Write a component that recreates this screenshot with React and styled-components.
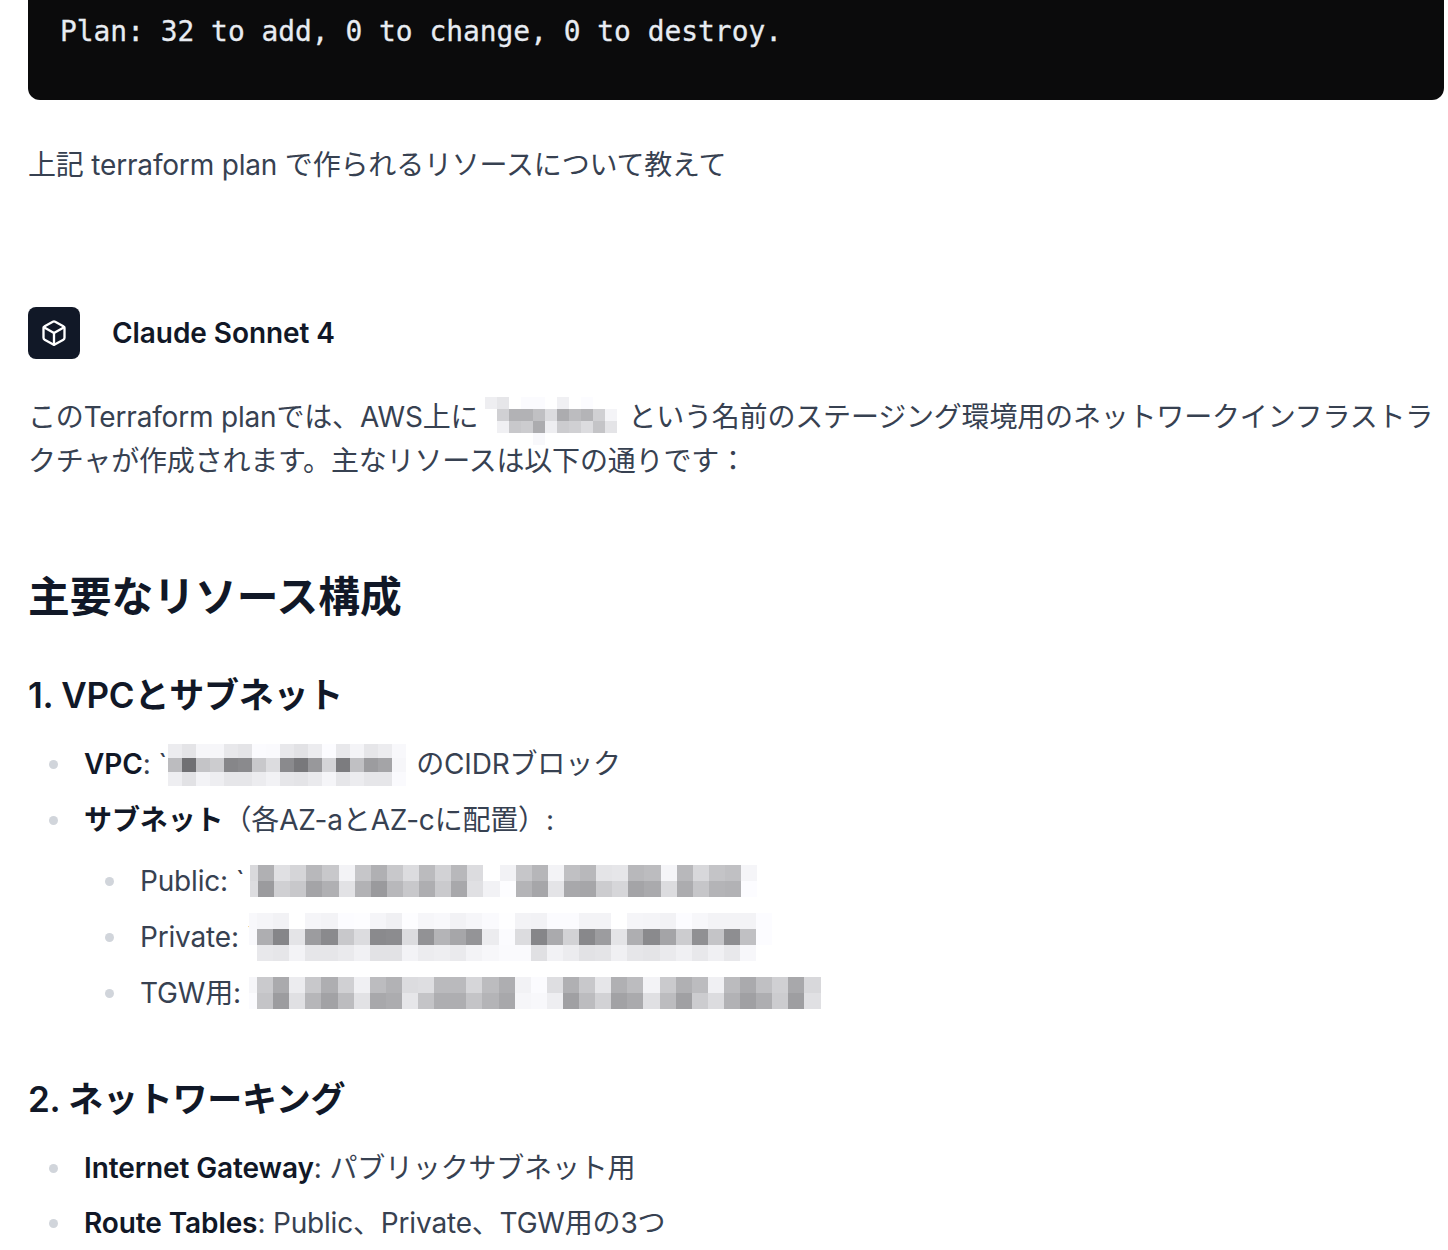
import React from 'react';
import styled, { createGlobalStyle } from 'styled-components';
import { Box } from 'lucide-react';

const GlobalStyle = createGlobalStyle`
  html, body {
    margin: 0;
    padding: 0;
    background: #ffffff;
  }
  body {
    font-family: Inter, "Noto Sans CJK JP", sans-serif;
    font-size: 28px;
    line-height: 44px;
    letter-spacing: -0.18px;
    color: #374151;
  }
`;

const Page = styled.div`
  height: 1250px;
  padding: 0 4px 0 28px;
  overflow: hidden;
`;

const CodeBlock = styled.pre`
  margin: 0;
  height: 100px;
  padding: 10px 32px 0;
  box-sizing: border-box;
  background: #0b0b0c;
  border-radius: 0 0 12px 12px;
  color: #e8ecf2;
  font-family: "DejaVu Sans Mono", "Liberation Mono", monospace;
  font-size: 27.9px;
  line-height: 44px;
  letter-spacing: 0;
  -webkit-text-stroke: 0.3px #e8ecf2;
`;

const Paragraph = styled.p`
  margin: ${p => p.$top}px 0 0;
`;

const ModelHeader = styled.div`
  display: flex;
  align-items: center;
  gap: 32px;
  margin-top: 120px;
`;

const Avatar = styled.div`
  display: flex;
  align-items: center;
  justify-content: center;
  width: 52px;
  height: 52px;
  border-radius: 8px;
  background: #111827;
  color: #ffffff;
`;

const ModelName = styled.div`
  font-weight: 600;
  letter-spacing: -0.07px;
  color: #111827;
`;

const Heading2 = styled.h2`
  margin: 88px 0 0;
  font-size: 41.75px;
  line-height: 52px;
  font-weight: 700;
  letter-spacing: 0;
  color: #111827;
`;

const Heading3 = styled.h3`
  margin: ${p => p.$top}px 0 0;
  font-size: 35px;
  line-height: 44px;
  font-weight: 600;
  letter-spacing: -0.25px;
  color: #111827;
`;

const List = styled.ul`
  margin: ${p => p.$top}px 0 0;
  padding-left: 45.5px;
  list-style-type: disc;
`;

const Item = styled.li`
  padding-left: 10.5px;
  margin-top: ${p => p.$gap}px;
  &::marker {
    color: #d1d5db;
  }
`;

const Strong = styled.strong`
  font-weight: 600;
  letter-spacing: -0.1px;
  color: #111827;
`;

const MosaicSvg = styled.svg`
  display: inline-block;
  vertical-align: top;
  margin-top: ${p => p.$top}px;
  margin-left: ${p => p.$left}px;
  margin-right: ${p => p.$right}px;
  margin-bottom: -40px;
  filter: blur(0.4px);
`;

// redacted text in the screenshot: each row is a list of grey levels
function Mosaic({ cell, rowHeight, rows, offset = 0, top = 0, left = 0, right = 0 }) {
  const cols = Math.max(...rows.map(r => r.length));
  const h = rowHeight || cell;
  return (
    <MosaicSvg
      width={cols * cell + offset}
      height={rows.length * h}
      shapeRendering="crispEdges"
      $top={top}
      $left={left}
      $right={right}
    >
      {rows.map((row, y) =>
        row.map((v, x) => {
          const g = parseInt(v, 16);
          return (
            <rect
              key={x}
              x={x === 0 && offset ? 0 : x * cell + offset - (offset ? cell : 0)}
              y={y * h}
              width={x === 0 && offset ? offset : cell}
              height={h}
              fill={`rgb(${g},${g},${Math.min(g + 3, 255)})`}
            />
          );
        })
      )}
    </MosaicSvg>
  );
}

const toRow = s => s.split(' ');

const bucketRows = [
  'ee e6 ff fb fb ff f0 ff fc ff ff',
  'ff d0 b2 b2 c0 dc ac bc b4 d0 f4',
  'ff f0 c8 cc ac ee cc d0 dc c4 e4',
  'ff ff ff ff f8 ff ff ff ff ff ff'
].map(toRow);

const vpcRows = [
  'ec e4 f6 f6 e8 e4 fb fa e8 e2 ec fc e8 f4 e6 ec f8',
  'bc 70 c4 cc 86 8a c8 dc 8a 78 98 d4 7c c0 9c a4 f6',
  'ee e2 f3 ee e6 e6 ec f2 e6 e4 ea f5 e6 ec e6 e6 fa'
].map(toRow);

const publicRows = [
  'd9 b0 e0 d5 b8 c8 f3 c6 b0 c8 dc bb d2 b8 dc ff f2 c6 b6 f3 c0 b8 e4 e6 b8 bc f5 b8 d8 c4 c0 f5',
  'dd 9b d0 c8 a4 b0 e2 b2 9a b8 c8 ae ca a8 e0 f2 fd b4 a6 e4 a8 a6 cc d6 a4 aa dc ac c6 b4 b2 fc'
].map(toRow);

const privateRows = [
  'f8 f5 f2 ff f5 f3 fc fd f5 f0 fd f6 f8 f2 f6 fa fe f3 f2 fb fb f3 f3 ff f5 f4 f2 fc f7 f3 f3 f3 fc',
  'f9 ae 86 e4 9c 8a c8 dc 8a 8c dc 92 b4 a6 94 ec fb dc 86 aa d2 88 9c e4 ae 8a a4 cc 90 c4 8e c0 fc',
  'ff e8 e6 f3 e6 e6 ea f1 e2 e2 f3 ec ee ea f3 f7 fa fa e0 f2 ec e2 e4 f0 e6 e4 ea f0 e8 f0 e8 f7 ff'
].map(toRow);

const tgwRows = [
  'f6 ca aa ec c8 ae d0 f0 bc b2 dc de ba ba d6 bc ae f2 fb de b0 c8 e6 b0 bc f3 ca b0 bc f0 bb aa c0 d0 a8 d8',
  'fb c4 9c e0 b6 a2 bc e2 a8 ac e6 c4 ae ae c4 b4 a8 f6 f8 ee a0 bc d2 a2 aa e0 bc a0 cc dc b2 a0 ae cc 9e e0'
].map(toRow);

export default function App() {
  return (
    <Page>
      <GlobalStyle />
      <CodeBlock>Plan: 32 to add, 0 to change, 0 to destroy.</CodeBlock>

      <Paragraph $top={43}>上記 terraform plan で作られるリソースについて教えて</Paragraph>

      <ModelHeader>
        <Avatar>
          <Box size={28} strokeWidth={2} />
        </Avatar>
        <ModelName>Claude Sonnet 4</ModelName>
      </ModelHeader>

      <Paragraph $top={36}>
        このTerraform planでは、AWS上に
        <Mosaic cell={12} rows={bucketRows} top={2} left={7} right={11} />
        という名前のステージング環境用のネットワークインフラストラクチャが作成されます。主なリソースは以下の通りです：
      </Paragraph>

      <Heading2>主要なリソース構成</Heading2>

      <Heading3 $top={50}>1. VPCとサブネット</Heading3>
      <List $top={25}>
        <Item $gap={0}>
          <Strong>VPC</Strong>: `
          <Mosaic cell={14} rows={vpcRows} top={2} left={1} right={10} />
          のCIDRブロック
        </Item>
        <Item $gap={12}>
          <Strong>サブネット</Strong>（各AZ-aとAZ-cに配置）:
          <List $top={17}>
            <Item $gap={0}>
              Public: `
              <Mosaic cell={16.1} rowHeight={16} offset={8} rows={publicRows} top={6} left={5} />
            </Item>
            <Item $gap={12}>
              Private: `
              <Mosaic cell={16.1} rowHeight={16} offset={8} rows={privateRows} top={-2} left={-6} />
            </Item>
            <Item $gap={12}>
              TGW用:
              <Mosaic cell={16.1} rowHeight={16} offset={8} rows={tgwRows} top={6} left={8.5} />
            </Item>
          </List>
        </Item>
      </List>

      <Heading3 $top={62}>2. ネットワーキング</Heading3>
      <List $top={25}>
        <Item $gap={0}>
          <Strong>Internet Gateway</Strong>: パブリックサブネット用
        </Item>
        <Item $gap={11}>
          <Strong>Route Tables</Strong>: Public、Private、TGW用の3つ
        </Item>
      </List>
    </Page>
  );
}
